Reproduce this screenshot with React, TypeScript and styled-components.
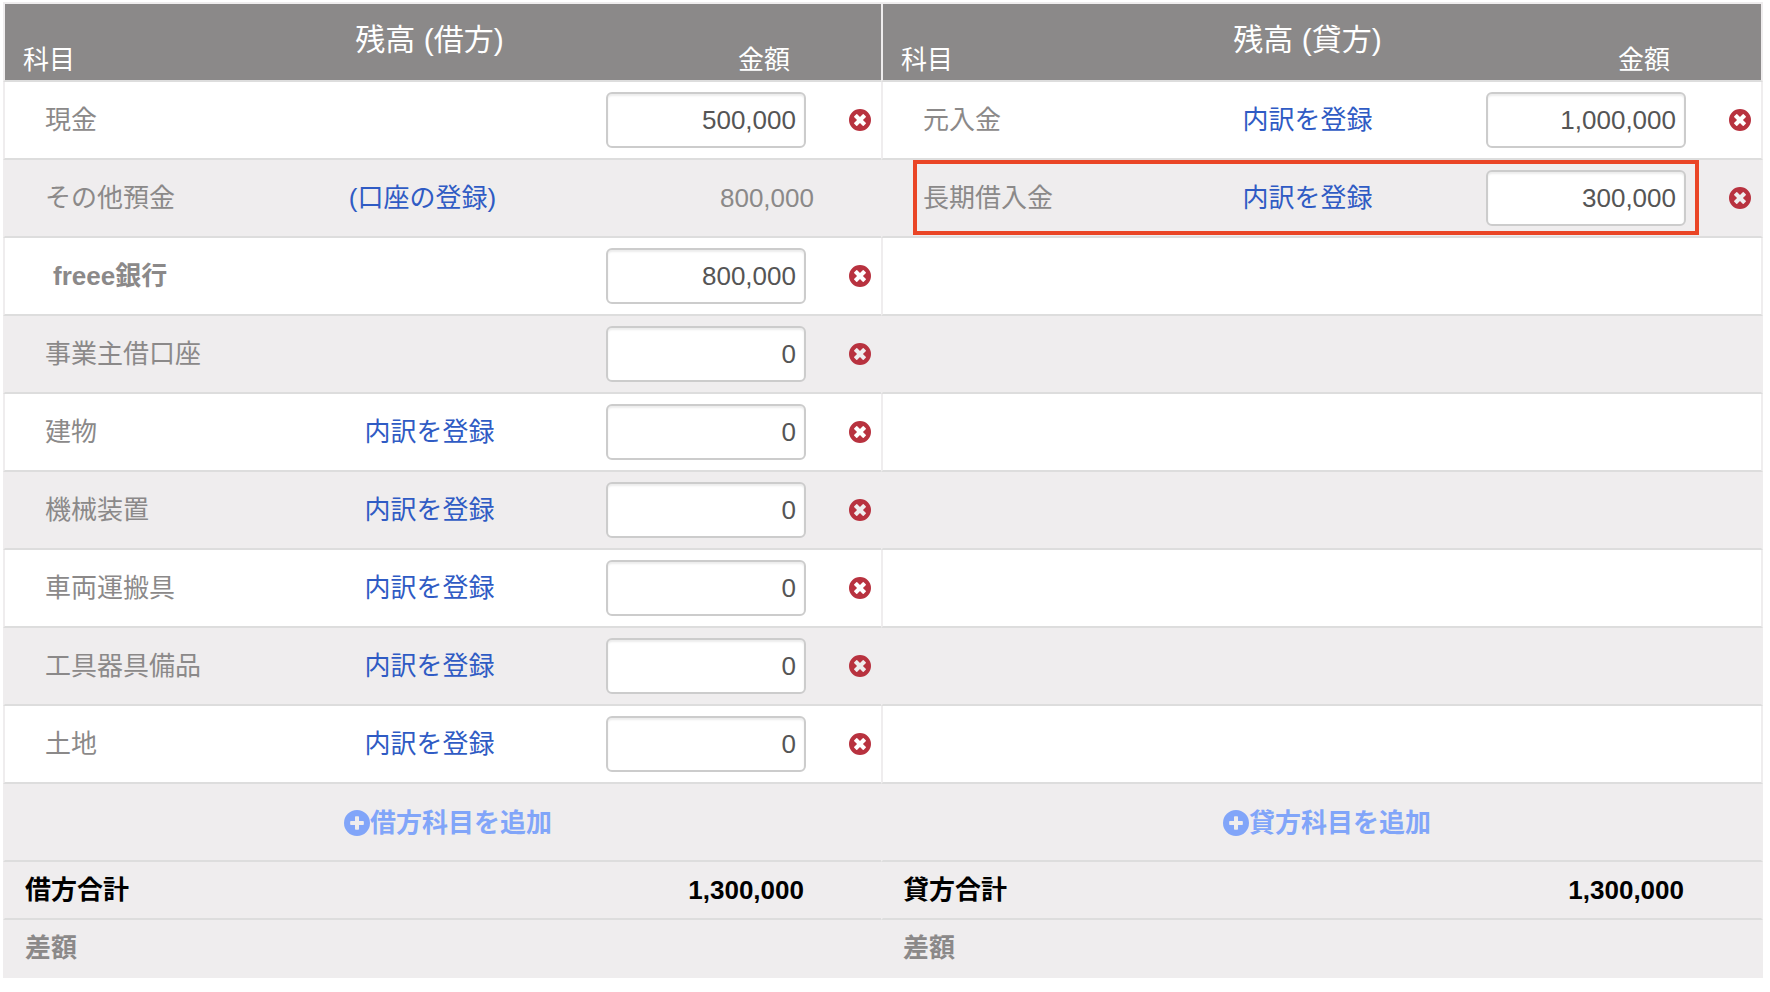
import React, { useState } from 'react';
import styled, { createGlobalStyle, css } from 'styled-components';

const color = {
  head: '#8b8989',
  stripe: '#efedee',
  line: '#dddddd',
  text: '#8b8989',
  link: '#2f5bc4',
  add: '#81a5f9',
  danger: '#b8323f',
  input: '#555555',
  mark: '#ea4526',
};

const GlobalStyle = createGlobalStyle`
  *, *::before, *::after { box-sizing: border-box; }
  body {
    margin: 0;
    background: #ffffff;
    color: ${color.text};
    font-family: "Liberation Sans", "Noto Sans CJK JP", sans-serif;
    font-size: 26px;
    line-height: 36px;
  }
`;

const Page = styled.main`
  padding: 2px 7px 14px 3px;
`;

const Sheet = styled.table`
  width: 100%;
  table-layout: fixed;
  border-collapse: separate;
  border-spacing: 0;
  border-top: 2px solid ${color.stripe};
`;

const AmountCol = styled.col<{ $last?: boolean }>`
  width: ${(p) => (p.$last ? 268 : 266)}px;
`;

const DeleteCol = styled.col<{ $last?: boolean }>`
  width: ${(p) => (p.$last ? 44 : 42)}px;
`;

const HeadRow = styled.tr`
  height: 78px;
  background: ${color.head};
  color: #ffffff;
`;

const Row = styled.tr<{ $striped?: boolean; $short?: boolean }>`
  position: relative;
  height: ${(p) => (p.$short ? 58 : 78)}px;
  background: ${(p) => (p.$striped ? color.stripe : '#ffffff')};
`;

const edge = css<{ $start?: boolean; $end?: boolean }>`
  padding: 0;
  border: 0 solid ${color.line};
  border-bottom-width: 2px;
  ${(p) => p.$start && css`border-left: 2px solid ${color.stripe};`}
  ${(p) => p.$end && css`border-right: 2px solid ${color.stripe};`}
`;

const HeadCell = styled.th<{ $start?: boolean; $end?: boolean }>`
  ${edge}
  font-weight: 400;
  vertical-align: bottom;
`;

const HeadName = styled(HeadCell)`
  padding: 0 0 2px 18px;
  text-align: left;
`;

const HeadTitle = styled(HeadCell)`
  padding: 18px 2px 0 0;
  font-size: 30px;
  vertical-align: top;
  white-space: nowrap;
`;

const HeadAmount = styled(HeadCell)`
  padding: 0 91px 2px 0;
  text-align: right;
`;

const Cell = styled.td<{ $start?: boolean; $end?: boolean }>`
  ${edge}
`;

const NameCell = styled.th<{ $start?: boolean; $bold?: boolean }>`
  ${edge}
  padding-left: ${(p) => (p.$bold ? 48 : 40)}px;
  font-weight: ${(p) => (p.$bold ? 700 : 400)};
  text-align: left;
  white-space: nowrap;
`;

const LinkCell = styled(Cell)<{ $wide?: boolean }>`
  padding-right: ${(p) => (p.$wide ? 16 : 2)}px;
  text-align: center;
  white-space: nowrap;
`;

const AmountCell = styled(Cell)<{ $plain?: boolean }>`
  padding-right: ${(p) => (p.$plain ? 25 : 33)}px;
  text-align: right;
`;

const DetailLink = styled.a`
  color: ${color.link};
  text-decoration: none;
`;

const AmountInput = styled.input`
  display: block;
  width: 200px;
  height: 56px;
  margin-left: auto;
  padding: 0 8px;
  border: 2px solid #cccccc;
  border-radius: 6px;
  background: #ffffff;
  box-shadow: inset 0 2px 2px rgba(0, 0, 0, 0.08);
  color: ${color.input};
  font: inherit;
  text-align: right;
`;

const DeleteButton = styled.button`
  display: block;
  width: 22px;
  height: 22px;
  margin: 0 auto;
  padding: 0;
  border: 0;
  background: none;
  color: ${color.danger};
  cursor: pointer;
`;

const Icon = styled.svg`
  display: block;
  width: 100%;
  height: 100%;
`;

const AddCell = styled(Cell)`
  padding-left: 10px;
  text-align: center;
`;

const AddButton = styled.button`
  display: inline-flex;
  align-items: center;
  padding: 0;
  border: 0;
  background: none;
  color: ${color.add};
  font: inherit;
  font-weight: 700;
  vertical-align: middle;
  cursor: pointer;
`;

const AddIcon = styled.span`
  width: 26px;
  height: 26px;
`;

const TotalName = styled.th<{ $start?: boolean; $strong?: boolean }>`
  ${edge}
  padding-left: 20px;
  color: ${(p) => (p.$strong ? '#000000' : color.text)};
  font-weight: 700;
  text-align: left;
`;

const TotalAmount = styled(Cell)`
  padding-right: 35px;
  color: #000000;
  font-weight: 700;
  text-align: right;
`;

const LastRow = styled(Row)`
  > * {
    border-bottom-color: ${color.stripe};
  }
`;

const Highlight = styled.span`
  position: absolute;
  top: 0;
  right: 64px;
  bottom: 3px;
  left: calc(50% + 30px);
  border: 4px solid ${color.mark};
  pointer-events: none;
`;

type Account = {
  name: string;
  value: string;
  link?: string;
  plain?: boolean;
  bold?: boolean;
  marked?: boolean;
};

const detail = '内訳を登録';

const debit: Account[] = [
  { name: '現金', value: '500,000' },
  { name: 'その他預金', value: '800,000', link: '(口座の登録)', plain: true },
  { name: 'freee銀行', value: '800,000', bold: true },
  { name: '事業主借口座', value: '0' },
  { name: '建物', value: '0', link: detail },
  { name: '機械装置', value: '0', link: detail },
  { name: '車両運搬具', value: '0', link: detail },
  { name: '工具器具備品', value: '0', link: detail },
  { name: '土地', value: '0', link: detail },
];

const credit: Account[] = [
  { name: '元入金', value: '1,000,000', link: detail },
  { name: '長期借入金', value: '300,000', link: detail, marked: true },
];

// A disc with a rounded plus cut out of it: `half` is half an arm's thickness
// and `reach` is its length from the centre.
function discPath(half: number, reach: number) {
  const r = 0.7;
  const across = 2 * (half - r);
  const along = reach - half - r;
  return [
    'M11 0a11 11 0 1 0 0 22a11 11 0 1 0 0-22z',
    `M${11 - half + r} ${11 - reach}h${across}q${r} 0 ${r} ${r}v${along}`,
    `h${along}q${r} 0 ${r} ${r}v${across}q0 ${r} ${-r} ${r}h${-along}`,
    `v${along}q0 ${r} ${-r} ${r}h${-across}q${-r} 0 ${-r} ${-r}v${-along}`,
    `h${-along}q${-r} 0 ${-r} ${-r}v${-across}q0 ${-r} ${r} ${-r}h${along}`,
    `v${-along}q0 ${-r} ${r} ${-r}z`,
  ].join('');
}

function CrossCircle() {
  return (
    <Icon viewBox="0 0 22 22" aria-hidden="true">
      <path d={discPath(2.1, 6.7)} fill="currentColor" fillRule="evenodd" transform="rotate(45 11 11)" />
    </Icon>
  );
}

function PlusCircle() {
  return (
    <Icon viewBox="0 0 22 22" aria-hidden="true">
      <path d={discPath(1.7, 5.8)} fill="currentColor" fillRule="evenodd" />
    </Icon>
  );
}

function AccountCells({ account, end }: { account?: Account; end?: boolean }) {
  const [value, setValue] = useState(account ? account.value : '');
  if (!account) return <Cell colSpan={4} $start $end={end} />;
  return (
    <>
      <NameCell scope="row" $start $bold={account.bold}>
        {account.name}
        {account.marked && <Highlight />}
      </NameCell>
      <LinkCell $wide={account.plain}>
        {account.link && <DetailLink href="#">{account.link}</DetailLink>}
      </LinkCell>
      <AmountCell $plain={account.plain}>
        {account.plain ? value : (
          <AmountInput
            type="text"
            inputMode="numeric"
            aria-label={`${account.name} 金額`}
            value={value}
            onChange={(e) => setValue(e.target.value)}
          />
        )}
      </AmountCell>
      <Cell $end={end}>
        {!account.plain && (
          <DeleteButton type="button" aria-label={`${account.name}を削除`}>
            <CrossCircle />
          </DeleteButton>
        )}
      </Cell>
    </>
  );
}

const sides = ['借方', '貸方'];

export default function App() {
  return (
    <Page>
      <GlobalStyle />
      <Sheet>
        <colgroup>
          <col /><col /><AmountCol /><DeleteCol />
          <col /><col /><AmountCol $last /><DeleteCol $last />
        </colgroup>
        <thead>
          <HeadRow>
            {sides.map((side, i) => (
              <React.Fragment key={side}>
                <HeadName scope="col" $start>科目</HeadName>
                <HeadTitle scope="col">残高 ({side})</HeadTitle>
                <HeadAmount scope="col" colSpan={2} $end={i === 1}>金額</HeadAmount>
              </React.Fragment>
            ))}
          </HeadRow>
        </thead>
        <tbody>
          {debit.map((account, i) => (
            <Row key={account.name} $striped={i % 2 === 1}>
              <AccountCells account={account} />
              <AccountCells account={credit[i]} end />
            </Row>
          ))}
        </tbody>
        <tfoot>
          <Row $striped>
            {sides.map((side, i) => (
              <AddCell key={side} colSpan={4} $start $end={i === 1}>
                <AddButton type="button">
                  <AddIcon><PlusCircle /></AddIcon>
                  {side}科目を追加
                </AddButton>
              </AddCell>
            ))}
          </Row>
          <Row $striped $short>
            {sides.map((side, i) => (
              <React.Fragment key={side}>
                <TotalName scope="row" colSpan={2} $start $strong>{side}合計</TotalName>
                <TotalAmount>1,300,000</TotalAmount>
                <Cell $end={i === 1} />
              </React.Fragment>
            ))}
          </Row>
          <LastRow $striped $short>
            {sides.map((side) => (
              <React.Fragment key={side}>
                <TotalName scope="row" colSpan={2} $start>差額</TotalName>
                <TotalAmount colSpan={2} />
              </React.Fragment>
            ))}
          </LastRow>
        </tfoot>
      </Sheet>
    </Page>
  );
}
